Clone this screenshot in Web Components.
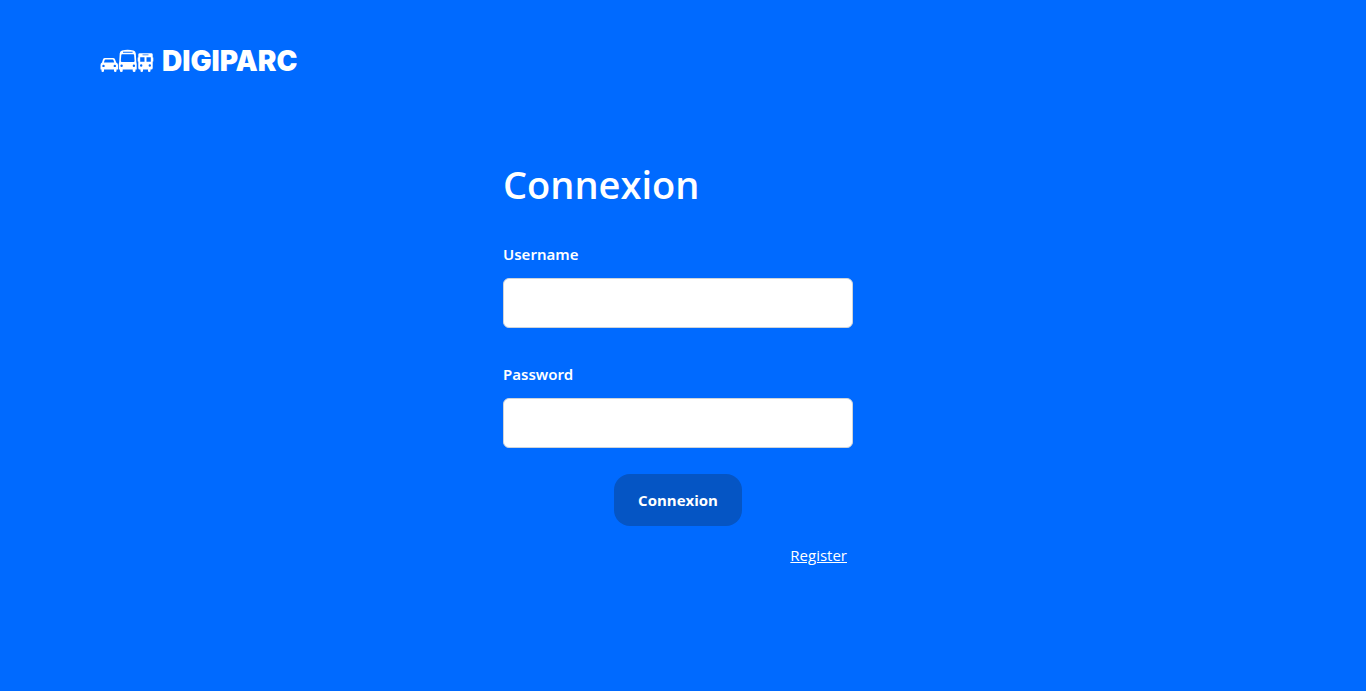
<!DOCTYPE html>
<html lang="fr">
<head>
<meta charset="utf-8">
<meta name="viewport" content="width=device-width, initial-scale=1">
<title>Digiparc</title>
<style>
  body { margin: 0; min-height: 100vh; background: #006aff; color: #fff; font: 16px/24px "Open Sans", "Noto Sans", sans-serif; }
</style>
</head>
<body>
<login-page></login-page>
<script>
const define = (name, html) => {
  const template = document.createElement('template');
  template.innerHTML = html;
  customElements.define(name, class extends HTMLElement {
    constructor() {
      super();
      this.attachShadow({ mode: 'open' }).append(template.content.cloneNode(true));
    }
  });
};

define('brand-logo', `
  <style>
    :host { display: flex; align-items: center; gap: 8px; font: 900 28px/34px Inter, Lato, sans-serif; }
    svg { display: block; width: 54px; height: 24px; }
  </style>
  <svg viewBox="0 0 54 24" fill="#fff" fill-rule="evenodd" aria-hidden="true">
    <path d="M5 9h8q1.500 0 2 1.200l1.200 3.300q1.800.5 1.800 2.500v4.500h-1.500V22q0 1-1.200 1T14 22v-1.500H4V22q0 1-1.300 1T1.500 22v-1.500H.500V16q0-2 1.500-2.500L3 10.200Q3.500 9 5 9Zm.500 1.400q-.6 0-.8.600L3.900 13.500h10.300l-.8-2.500q-.2-.6-.8-.6ZM3.500 15.700a1.200 1.200 0 1 0 0 2.400 1.200 1.200 0 0 0 0-2.400Zm11.300 0a1.200 1.200 0 1 0 0 2.400 1.200 1.200 0 0 0 0-2.400Z"/>
    <path d="M22 1.500Q27.500 0 33.500 1.500q2 .6 2.300 3l.5 8.500.4 2v5.500h-1.200V22q0 1-1.400 1t-1.400-1v-1.500h-10V22q0 1-1.400 1t-1.400-1v-1.500H18.800V15l.4-2 .5-8.500q.3-2.400 2.300-3Zm1 1.300v1h9.600v-1Zm-1 2.400q-.6 0-.7.700l-.5 6.200q-.1.800.8.800h12.200q.9 0 .8-.8l-.5-6.200q-.1-.7-.7-.7ZM21.600 15.500a1.200 1.200 0 1 0 0 2.400 1.200 1.200 0 0 0 0-2.400Zm12.300 0a1.200 1.200 0 1 0 0 2.400 1.200 1.200 0 0 0 0-2.400Z"/>
    <path d="M39.500 4.200h12q1 0 1.200 1.300v3h.6v4h-.6v6.500q0 1.500-1.500 1.500h-.7V22q0 1-1.300 1T48 22v-1.500h-5V22q0 1-1.300 1t-1.200-1v-1.500h-.7q-1.500 0-1.500-1.500v-6.500h-.6v-4h.6v-3q.2-1.300 1.200-1.300Zm3 1.300v.8h6v-.8Zm-2.300 2.700v4.600h4.300V8.200Zm6.300 0v4.600h4.300V8.200ZM41.200 15.300a1.200 1.200 0 1 0 0 2.400 1.200 1.200 0 0 0 0-2.400Zm8.600 0a1.200 1.200 0 1 0 0 2.400 1.200 1.200 0 0 0 0-2.400Z"/>
  </svg>
  <span>DIGIPARC</span>`);

define('login-form', `
  <style>
    :host { display: block; width: 350px; max-width: 100%; }
    form { display: flex; flex-direction: column; }
    h1 { margin: 0 0 32px; font-size: 38px; line-height: 52px; font-weight: 600; }
    label { margin-bottom: 12px; font: 600 15px/24px "Noto Sans", sans-serif; }
    input { box-sizing: border-box; width: 100%; height: 50px; margin: 0 0 34px; padding: 0 12px; border: 1px solid #ced4da; border-radius: 6px; background: #fff; font: inherit; }
    input:last-of-type { margin-bottom: 26px; }
    button { align-self: center; box-sizing: border-box; height: 52px; padding: 0 24px; border: 0; border-radius: 16px; background: #0555c4; color: #fff; font: 700 15px/24px "Open Sans", sans-serif; }
    a { align-self: flex-end; margin: 17px 6px 0 0; color: #fff; font-size: 15px; line-height: 24px; }
  </style>
  <form>
    <h1>Connexion</h1>
    <label for="username">Username</label>
    <input id="username" type="text" autocomplete="username">
    <label for="password">Password</label>
    <input id="password" type="password" autocomplete="current-password">
    <button type="submit">Connexion</button>
    <a href="#register">Register</a>
  </form>`);

define('login-page', `
  <style>
    :host { display: block; }
    header { padding: 44px 100px 0; }
    main { display: flex; justify-content: center; padding: 80px 20px 40px 10px; }
  </style>
  <header><brand-logo></brand-logo></header>
  <main><login-form></login-form></main>`);
</script>
</body>
</html>
